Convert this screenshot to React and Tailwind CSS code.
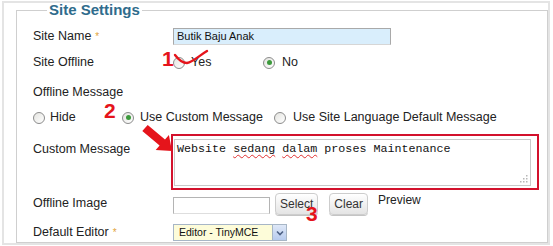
import React from "react";

function Radio({ checked }) {
  return (
    <span className="relative inline-flex items-center justify-center w-[12px] h-[12px] rounded-full border border-[#8c8c8c] bg-gradient-to-br from-[#e4e4e0] to-white shrink-0">
      {checked && <span className="w-[5px] h-[5px] rounded-full bg-[#3c9a3c]" />}
    </span>
  );
}

function Label({ children, req }) {
  return (
    <div className="w-[140px] shrink-0 text-[12.5px] text-[#222] leading-[17px]">
      {children}
      {req && <span className="text-[#e2a33a] text-[10px] align-top ml-[4px]">*</span>}
    </div>
  );
}

function Btn({ children }) {
  return (
    <span className="inline-flex items-center justify-center h-[22px] px-[4px] rounded-[4px] border border-[#cdcdcd] bg-gradient-to-b from-white to-[#e4e4e4] text-[12px] text-[#333] shadow-[0_1px_0_#c4c4c4]">
      {children}
    </span>
  );
}

export default function App() {
  return (
    <div className="w-[553px] h-[246px] bg-white overflow-hidden relative font-['Liberation_Sans',Arial,sans-serif]">
      <div className="absolute left-[2px] top-[1px] w-[548px] h-[244px] border-2 border-[#e4e4e4] pointer-events-none" />
      <fieldset className="relative ml-[16px] mt-[1px] w-[530px] h-[242px] border border-[#cfcfcf] pl-[16px] pr-[8px]">
        <legend className="ml-[14px] px-[2px] text-[15px] leading-[18px] font-bold text-[#2f6c8c]">Site Settings</legend>

        <div className="flex items-center h-[17px] mt-[9px]">
          <Label req>Site Name</Label>
          <div className="w-[218px] h-[17px] border border-[#a9a9a9] border-b-[#d6d6d6] bg-[#d9eefc] text-[11px] leading-[15px] pl-[3px] text-[#111]">
            Butik Baju Anak
          </div>
        </div>

        <div className="flex items-center h-[17px] mt-[9px]">
          <Label>Site Offline</Label>
          <div className="flex items-center text-[12.5px] text-[#222]">
            <Radio />
            <span className="ml-[6px] w-[72px]">Yes</span>
            <Radio checked />
            <span className="ml-[7px]">No</span>
          </div>
        </div>

        <div className="flex items-center h-[17px] mt-[13px]">
          <Label>Offline Message</Label>
        </div>

        <div className="flex items-center h-[17px] mt-[8px] text-[12.5px] text-[#222]">
          <Radio />
          <span className="ml-[5px] w-[72px]">Hide</span>
          <Radio checked />
          <span className="ml-[6px] w-[134px]">Use Custom Message</span>
          <Radio />
          <span className="ml-[7px]">Use Site Language Default Message</span>
        </div>

        <div className="flex mt-[8px]">
          <div className="pt-[7px]">
            <Label>Custom Message</Label>
          </div>
          <div className="w-[368px] h-[56px] -ml-[2px] border-2 border-[#d3112c] pt-[3px] pl-[1px] pr-[6px] pb-[2px]">
            <div className="relative h-full border border-[#c9c9c9] pl-[2px] pt-[2px] font-['Liberation_Mono','Courier_New',monospace] text-[11.7px] leading-[14px] text-[#111]">
              Website{" "}
              <span className="underline decoration-wavy decoration-[#e03030] decoration-1 underline-offset-2">sedang</span>{" "}
              <span className="underline decoration-wavy decoration-[#e03030] decoration-1 underline-offset-2">dalam</span>{" "}
              proses Maintenance
              <svg className="absolute right-[2px] bottom-[2px]" width="9" height="9" viewBox="0 0 9 9">
                <g fill="#b8b8b8">
                  <rect x="7" y="1" width="1.5" height="1.5" />
                  <rect x="4" y="4" width="1.5" height="1.5" />
                  <rect x="7" y="4" width="1.5" height="1.5" />
                  <rect x="1" y="7" width="1.5" height="1.5" />
                  <rect x="4" y="7" width="1.5" height="1.5" />
                  <rect x="7" y="7" width="1.5" height="1.5" />
                </g>
              </svg>
            </div>
          </div>
        </div>

        <div className="flex items-center h-[23px] mt-[2px]">
          <Label>Offline Image</Label>
          <div className="w-[97px] h-[17px] border border-[#b4b4b4] border-b-[#dedede] bg-white mt-[4px]" />
          <div className="ml-[5px] mb-[1px]"><Btn>Select</Btn></div>
          <div className="ml-[11px] mb-[1px]"><Btn>Clear</Btn></div>
          <span className="ml-[10px] self-start mt-[1px] text-[12px] text-[#222] leading-[14px]">Preview</span>
        </div>

        <div className="flex items-center h-[17px] mt-[9px]">
          <Label req>Default Editor</Label>
          <div className="flex w-[114px] h-[17px] border border-[#a7b6c6] bg-[#fdfcd9]">
            <span className="flex-1 text-[10.5px] leading-[15px] pl-[5px] text-[#111]">Editor - TinyMCE</span>
            <span className="w-[14px] h-full flex items-center justify-center bg-gradient-to-b from-[#dfe8f7] to-[#b7cbee] border-l border-[#a7b6c6]">
              <svg width="8" height="6" viewBox="0 0 8 6">
                <path d="M1 1.5 L4 4.5 L7 1.5" fill="none" stroke="#4d6185" strokeWidth="1.6" />
              </svg>
            </span>
          </div>
        </div>
      </fieldset>

      {/* red annotations */}
      <span className="absolute left-[162px] top-[47px] text-[21px] font-bold text-[#e5141b] leading-[24px]">1</span>
      <svg className="absolute left-[172px] top-[46px]" width="40" height="22" viewBox="0 0 40 22">
        <path d="M3 9 C6 13 10 17 15 17 C21 16 28 9 35 5" fill="none" stroke="#e5141b" strokeWidth="2.4" strokeLinecap="round" />
      </svg>
      <span className="absolute left-[104px] top-[99px] text-[21px] font-bold text-[#e5141b] leading-[24px]">2</span>
      <span className="absolute left-[306px] top-[202px] text-[21px] font-bold text-[#e5141b] leading-[24px]">3</span>
      <svg className="absolute left-0 top-0 pointer-events-none" width="553" height="246">
        <polygon points="147.7,125 165,139.4 168.9,134.9 172,151 155.7,149.9 159.6,145.4 142.3,131" fill="#e5141b" />
      </svg>
    </div>
  );
}
